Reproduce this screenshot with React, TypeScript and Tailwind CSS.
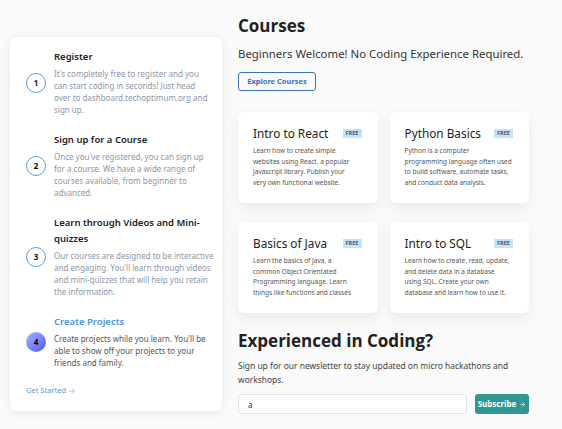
import { ArrowRight } from "lucide-react"

const steps = [
  {
    n: "1",
    title: "Register",
    lines: [
      "It's completely free to register and you",
      "can start coding in seconds! Just head",
      "over to dashboard.techoptimum.org and",
      "sign up.",
    ],
  },
  {
    n: "2",
    title: "Sign up for a Course",
    lines: [
      "Once you've registered, you can sign up",
      "for a course. We have a wide range of",
      "courses available, from beginner to",
      "advanced.",
    ],
  },
  {
    n: "3",
    title: "Learn through Videos and Mini-quizzes",
    lines: [
      "Our courses are designed to be interactive",
      "and engaging. You'll learn through videos",
      "and mini-quizzes that will help you retain",
      "the information.",
    ],
  },
]

const courses = [
  {
    title: "Intro to React",
    lines: [
      "Learn how to create simple",
      "websites using React, a popular",
      "Javascript library. Publish your",
      "very own functional website.",
    ],
  },
  {
    title: "Python Basics",
    lines: [
      "Python is a computer",
      "programming language often used",
      "to build software, automate tasks,",
      "and conduct data analysis.",
    ],
  },
  {
    title: "Basics of Java",
    lines: [
      "Learn the basics of Java, a",
      "common Object Orientated",
      "Programming language. Learn",
      "things like functions and classes",
    ],
  },
  {
    title: "Intro to SQL",
    lines: [
      "Learn how to create, read, update,",
      "and delete data in a database",
      "using SQL. Create your own",
      "database and learn how to use it.",
    ],
  },
]

function Lines({ lines }: { lines: string[] }) {
  return (
    <>
      {lines.map(l => (
        <span key={l} className="block whitespace-nowrap">
          {l}
        </span>
      ))}
    </>
  )
}

function Steps() {
  return (
    <div className="w-[212px] h-[374px] bg-white rounded-md shadow-[0_2px_10px_rgba(0,0,0,0.08)] pl-4 pr-[13px] pt-3 flex flex-col font-['Noto_Sans',sans-serif]">
      <div className="flex flex-col gap-[16px]">
        {steps.map(s => (
          <div key={s.n} className="flex items-center gap-2">
            <div className="w-5 h-5 shrink-0 rounded-full border-[1.5px] border-[#4aa3e8] flex items-center justify-center text-[8px] font-bold text-[#111]">
              {s.n}
            </div>
            <div className="flex flex-col gap-[3px]">
              <h3 className="text-[9.5px] leading-4 font-semibold text-[#222]">{s.title}</h3>
              <p className="text-[8px] leading-3 text-[#8d96a8]">
                <Lines lines={s.lines} />
              </p>
            </div>
          </div>
        ))}
        <div className="flex items-center gap-2">
          <div className="w-5 h-5 shrink-0 rounded-full bg-gradient-to-br from-[#a6b8ff] to-[#5b4cf5] flex items-center justify-center text-[8px] font-bold text-black">
            4
          </div>
          <div className="flex flex-col gap-[3px]">
            <h3 className="text-[9.5px] leading-4 font-semibold text-[#4a94dc]">Create Projects</h3>
            <p className="text-[8px] leading-3 text-[#555]">
              <Lines
                lines={[
                  "Create projects while you learn. You'll be",
                  "able to show off your projects to your",
                  "friends and family.",
                ]}
              />
            </p>
          </div>
        </div>
      </div>
      <a className="mt-[16px] text-[7.5px] text-[#5b9bd5] flex items-center gap-[2px]">
        Get Started <ArrowRight className="w-[8px] h-[8px]" strokeWidth={1.5} />
      </a>
    </div>
  )
}

function CourseCard({ title, lines }: { title: string; lines: string[] }) {
  return (
    <div className="h-[91px] bg-white rounded-md shadow-[0_5px_14px_rgba(0,0,0,0.07)] pl-[15px] pr-4 pt-[12px] font-['Noto_Sans',sans-serif]">
      <div className="flex items-center justify-between">
        <h3 className="text-[11.8px] leading-[18px] text-[#1d1d1d]">{title}</h3>
        <span className="w-[19px] h-[9px] bg-[#c4e2f8] text-[#3f5a73] text-[5.5px] font-bold flex items-center justify-center">
          FREE
        </span>
      </div>
      <p className="mt-1 text-[6.5px] leading-[10.5px] text-[#555]">
        <Lines lines={lines} />
      </p>
    </div>
  )
}

export default function App() {
  return (
    <div className="w-[562px] h-[429px] bg-[#fafafa] flex overflow-hidden">
      <div className="pl-[10px] pt-[37px]">
        <Steps />
      </div>
      <div className="ml-4 pt-[14px] w-[291px] flex flex-col">
        <h1 className="text-[17px] leading-6 font-bold text-[#222] font-['Open_Sans',sans-serif]">Courses</h1>
        <p className="mt-[8px] text-[11.4px] leading-4 text-[#333] font-['Noto_Sans',sans-serif] whitespace-nowrap">
          Beginners Welcome! No Coding Experience Required.
        </p>
        <button className="mt-[10px] self-start w-[78px] h-[19px] border border-[#3b72b8] rounded-[3px] text-[7.5px] font-bold text-[#3b72b8] font-['Noto_Sans',sans-serif]">
          Explore Courses
        </button>
        <div className="mt-[21px] grid grid-cols-2 gap-x-3 gap-y-[19px]">
          {courses.map(c => (
            <CourseCard key={c.title} {...c} />
          ))}
        </div>
        <h2 className="mt-[16px] text-[17px] leading-6 font-bold text-[#222] font-['Open_Sans',sans-serif]">
          Experienced in Coding?
        </h2>
        <p className="mt-[6px] text-[8.45px] leading-[14px] text-[#444] font-['Noto_Sans',sans-serif]">
          <Lines lines={["Sign up for our newsletter to stay updated on micro hackathons and", "workshops."]} />
        </p>
        <div className="mt-[7px] flex items-center gap-2">
          <input
            defaultValue="a"
            className="w-[229px] h-5 bg-white border border-[#dbe3ee] rounded-[3px] px-[9px] text-[8px] text-[#333] font-['Noto_Sans',sans-serif] outline-none"
          />
          <button className="w-[54px] h-5 bg-[#2f9690] rounded-[3px] text-white text-[8px] font-bold flex items-center justify-center gap-[3px] font-['Noto_Sans',sans-serif]">
            Subscribe <ArrowRight className="w-[7px] h-[7px]" strokeWidth={2} />
          </button>
        </div>
      </div>
    </div>
  )
}
